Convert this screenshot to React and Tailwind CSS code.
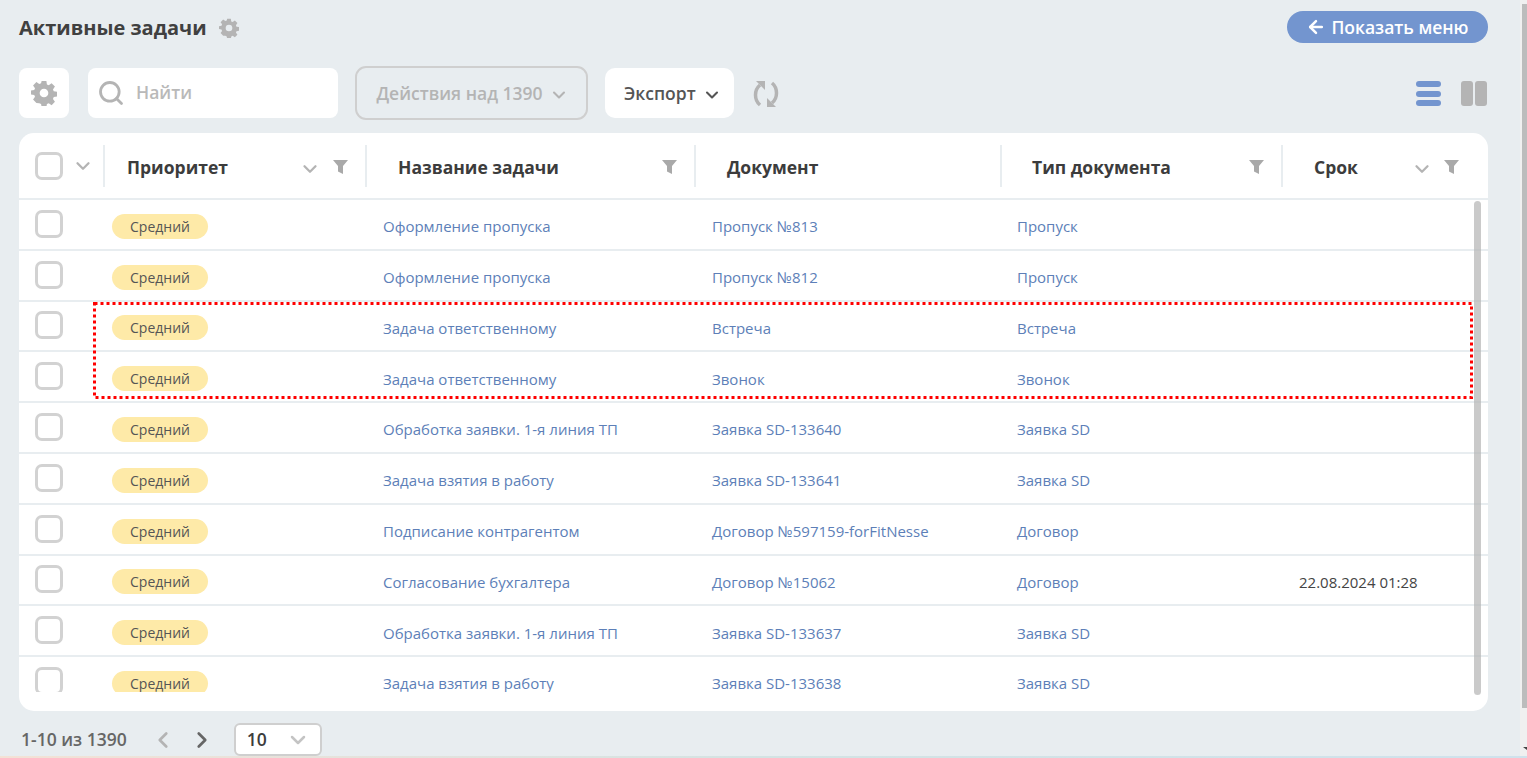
import { ChevronDown, ChevronLeft, ChevronRight, ArrowLeft, Search } from "lucide-react";

const rows = [
  ["Оформление пропуска", "Пропуск №813", "Пропуск", ""],
  ["Оформление пропуска", "Пропуск №812", "Пропуск", ""],
  ["Задача ответственному", "Встреча", "Встреча", ""],
  ["Задача ответственному", "Звонок", "Звонок", ""],
  ["Обработка заявки. 1-я линия ТП", "Заявка SD-133640", "Заявка SD", ""],
  ["Задача взятия в работу", "Заявка SD-133641", "Заявка SD", ""],
  ["Подписание контрагентом", "Договор №597159-forFitNesse", "Договор", ""],
  ["Согласование бухгалтера", "Договор №15062", "Договор", "22.08.2024 01:28"],
  ["Обработка заявки. 1-я линия ТП", "Заявка SD-133637", "Заявка SD", ""],
  ["Задача взятия в работу", "Заявка SD-133638", "Заявка SD", ""],
];

const gridCols = "grid grid-cols-[85px_262px_329px_306px_281px_206px]";

function Gear({ size = 24 }) {
  return (
    <svg width={size} height={size} viewBox="0 0 24 24" fill="#b4b4b4">
      <path
        fillRule="evenodd"
        d="M9.800 1h4.400l.5 3.100 1.700.7 2.600-1.800 3.100 3.100-1.800 2.600.7 1.700 3 .5v4.400l-3 .5-.7 1.700 1.800 2.600-3.100 3.100-2.600-1.800-1.700.7-.5 3H9.800l-.5-3-1.700-.7L5 21.200 1.900 18.100l1.800-2.600-.7-1.700-3-.5V9.800l3-.5.7-1.700L1.900 5 5 1.900l2.600 1.800 1.700-.7zM12 8a4 4 0 1 0 0 8 4 4 0 0 0 0-8z"
      />
    </svg>
  );
}

function Funnel() {
  return (
    <svg width="15" height="14" viewBox="0 0 15 14" fill="#a9a9a9">
      <path d="M0 0h15l-5 6v8l-5-2.500V6z" />
    </svg>
  );
}

function Checkbox() {
  return <div className="w-[28px] h-[28px] rounded-[7px] border-[3px] border-[#d2d2d2] bg-white" />;
}

function HeadCell({ title, pad, sort, filter = true, sortRight, filterRight }) {
  return (
    <div className="relative flex items-center h-full">
      <div className="-ml-[1px] w-[2px] h-[42px] bg-[#e8edf0]" />
      <span className={`${pad} pt-[4px] text-[17.500px] font-bold text-[#3c3c3c]`}>{title}</span>
      {sort && (
        <ChevronDown size={22} strokeWidth={2.5} color="#b4b4b4" className={`absolute top-[25px] ${sortRight}`} />
      )}
      {filter && (
        <span className={`absolute top-[27px] leading-none ${filterRight}`}>
          <Funnel />
        </span>
      )}
    </div>
  );
}

export default function App() {
  return (
    <div className="relative h-[758px] overflow-hidden bg-[#e8edf0] font-['Open_Sans',sans-serif]">
      <div className="w-[1520px] pl-[19px] pr-[32px] flex flex-col">
        {/* title */}
        <div className="h-[68px] flex items-start justify-between">
          <div className="flex items-center gap-[12px] pt-[14px]">
            <span className="text-[20px] font-bold text-[#404040] leading-[28px]">Активные задачи</span>
            <Gear size={20} />
          </div>
          <button className="mt-[11px] w-[201px] h-[32px] rounded-full bg-[#7395cf] text-white text-[17.500px] font-semibold flex items-center justify-center gap-[5px]">
            <ArrowLeft size={20} strokeWidth={3} />
            Показать меню
          </button>
        </div>

        {/* toolbar */}
        <div className="h-[65px] flex items-start">
          <div className="w-[50px] h-[50px] rounded-[8px] bg-white flex items-center justify-center">
            <Gear size={26} />
          </div>
          <div className="ml-[19px] w-[250px] h-[50px] rounded-[8px] bg-white flex items-center pl-[9px]">
            <Search size={28} strokeWidth={2.4} color="#b4b4b4" />
            <span className="ml-[11px] -mt-[2px] text-[17.500px] font-semibold text-[#b9b9b9]">Найти</span>
          </div>
          <div className="ml-[17px] -mt-[2px] w-[233px] h-[54px] pl-[2px] rounded-[11px] border-2 border-[#cfcfcf] flex items-center justify-center gap-[6px] text-[17.500px] font-semibold text-[#b4b4b4]">
            Действия над 1390
            <ChevronDown size={20} strokeWidth={2.5} className="mt-[3px]" />
          </div>
          <div className="ml-[17px] w-[129px] h-[50px] rounded-[10px] bg-white flex items-center pl-[19px] gap-[6px] text-[17.500px] font-semibold text-[#555555]">
            Экспорт
            <ChevronDown size={20} strokeWidth={2.5} className="mt-[3px]" />
          </div>
          <svg className="ml-[19px] mt-[13px]" width="26" height="26" viewBox="0 0 26 26" fill="none">
            <path d="M7 24C1 19 1 9 7 4" stroke="#b4b4b4" strokeWidth="3.500" />
            <path d="M3 0h9v9z" fill="#b4b4b4" />
            <path d="M19 2c6 5 6 15 0 20" stroke="#b4b4b4" strokeWidth="3.500" />
            <path d="M23 26h-9v-9z" fill="#b4b4b4" />
          </svg>
          <div className="ml-auto mr-[1px] mt-[13px] flex items-start gap-[20px]">
            <div className="w-[25px] flex flex-col gap-[3.500px]">
              <div className="h-[6px] rounded-full bg-[#7395cf]" />
              <div className="h-[6px] rounded-full bg-[#7395cf]" />
              <div className="h-[6px] rounded-full bg-[#7395cf]" />
            </div>
            <div className="flex gap-[2px]">
              <div className="w-[12px] h-[25px] rounded-[3px] bg-[#b4b4b4]" />
              <div className="w-[12px] h-[25px] rounded-[3px] bg-[#b4b4b4]" />
            </div>
          </div>
        </div>

        {/* table */}
        <div className="relative h-[578px] w-[1469px] rounded-[15px] bg-white">
          <div className={`${gridCols} h-[65px]`}>
            <div className="flex items-center pl-[16px] gap-[9px]">
              <Checkbox />
              <ChevronDown size={22} strokeWidth={2.5} color="#b4b4b4" />
            </div>
            <HeadCell title="Приоритет" pad="pl-[22px]" sort sortRight="right-[45px]" filterRight="right-[18px]" />
            <HeadCell title="Название задачи" pad="pl-[31px]" filterRight="right-[18px]" />
            <HeadCell title="Документ" pad="pl-[31px]" filter={false} />
            <HeadCell title="Тип документа" pad="pl-[30px]" filterRight="right-[18px]" />
            <HeadCell title="Срок" pad="pl-[31px]" sort sortRight="right-[55px]" filterRight="right-[29px]" />
          </div>
          <div className="h-[2px] bg-[#e8edf0]" />

          <div className="h-[492px] overflow-hidden">
            {rows.map((r, i) => (
              <div key={i} className={`${gridCols} h-[50.800px] pt-[4px] border-b-2 border-[#e8edf0] items-center text-[15px]`}>
                <div className="pl-[16px] -mt-[5px]">
                  <Checkbox />
                </div>
                <div className="pl-[8px]">
                  <span className="inline-flex items-center justify-center w-[96px] h-[25px] rounded-full bg-[#feeaa8] text-[14px] text-[#555555]">
                    Средний
                  </span>
                </div>
                <div className="pl-[17px] text-[#5d7fb8]">{r[0]}</div>
                <div className="pl-[17px] text-[#5d7fb8]">{r[1]}</div>
                <div className="pl-[16px] text-[#5d7fb8]">{r[2]}</div>
                <div className="pl-[17px] text-[#444444]">{r[3]}</div>
              </div>
            ))}
          </div>

          {/* table scrollbar */}
          <div className="absolute left-[1455px] top-[68px] w-[7px] h-[494px] rounded-full bg-[#b4b4b4]/70" />
          {/* highlighted rows */}
          <svg className="absolute left-[74px] top-[169px]" width="1380" height="97" fill="none">
            <rect x="1.500" y="1.500" width="1377" height="94" stroke="#ff0000" strokeWidth="3" strokeDasharray="3 3" />
          </svg>
        </div>

        {/* pagination */}
        <div className="flex items-center h-[57px] pl-[2px] text-[#666666]">
          <span className="text-[17.500px] font-semibold">1-10 из 1390</span>
          <ChevronLeft size={26} strokeWidth={2.5} color="#b4b4b4" className="ml-[23px]" />
          <ChevronRight size={26} strokeWidth={2.5} color="#666666" className="ml-[13px]" />
          <div className="ml-[19px] w-[88px] h-[33px] rounded-[6px] border-2 border-[#cfcfcf] bg-white flex items-center justify-between pl-[11px] pr-[10px]">
            <span className="text-[17.500px] font-semibold text-[#3c3c3c]">10</span>
            <ChevronDown size={24} strokeWidth={2.5} color="#c4c4c4" />
          </div>
        </div>
      </div>

      {/* page scrollbar */}
      <div className="absolute right-0 top-0 w-[7px] h-[758px] bg-[#f0f0f0]">
        <div className="ml-[2px] w-[5px] mt-[4px] h-[704px] bg-[#bcbcbc]" />
        <svg className="absolute right-0 top-[747px]" width="4" height="3" viewBox="0 0 4 3" fill="#444444">
          <path d="M0 0h4v3z" />
        </svg>
      </div>

      {/* strip of the next section at the window's lower edge */}
      <div className="absolute left-0 right-0 bottom-0 h-[2px] bg-linear-to-r from-[#f3e2d6] via-[#d3e3e3] to-[#cfe2ec]" />
    </div>
  );
}
